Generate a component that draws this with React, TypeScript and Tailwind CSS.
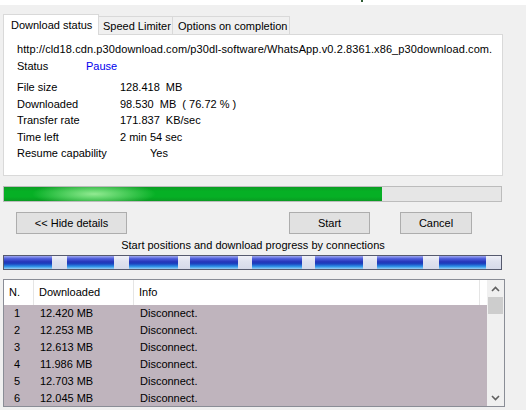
import React from 'react'

const font = { fontFamily: '"Liberation Sans", Arial, sans-serif' }

const details: [string, string][] = [
  ['File size', '128.418  MB'],
  ['Downloaded', '98.530  MB  ( 76.72 % )'],
  ['Transfer rate', '171.837  KB/sec'],
  ['Time left', '2 min 54 sec'],
]

// [width, isDownloaded] for each piece of the connections bar
const segments: [number, boolean][] = [
  [48, true], [15, false], [47, true], [15, false], [49, true], [12, false],
  [48, true], [14, false], [50, true], [13, false], [48, true], [14, false],
  [46, true], [16, false], [47, true], [15, false],
]

const connections = [
  ['1', '12.420 MB'],
  ['2', '12.253 MB'],
  ['3', '12.613 MB'],
  ['4', '11.986 MB'],
  ['5', '12.703 MB'],
  ['6', '12.045 MB'],
]

function Button({ label, className }: { label: string; className: string }) {
  return (
    <button className={`h-[22px] bg-[#e1e1e1] border border-[#adadad] text-[11px] text-black ${className}`}>
      {label}
    </button>
  )
}

export default function App() {
  return (
    <div className="w-[526px] h-[410px] overflow-hidden bg-[#f0f0f0] text-[11px] text-black" style={font}>
      {/* strip of the window above */}
      <div className="h-[5px] bg-white flex">
        <div className="ml-[361px] w-[2px] h-[2px] bg-[#2f5d34]" />
      </div>

      {/* tabs */}
      <div className="mt-[9px] ml-[3px] flex items-end h-[21px] relative z-10">
        <div className="w-[96px] h-[21px] bg-white border border-b-0 border-[#d9d9d9] pl-[7px] pt-[3px] leading-[14px]">
          Download status
        </div>
        <div className="w-[74px] h-[19px] border border-l-0 border-b-0 border-[#d9d9d9] pl-[4px] pt-[2px] leading-[14px]">
          Speed Limiter
        </div>
        <div className="w-[117px] h-[19px] border border-l-0 border-b-0 border-[#d9d9d9] pl-[5px] pt-[2px] leading-[14px]">
          Options on completion
        </div>
      </div>

      {/* tab panel */}
      <div className="-mt-px ml-[3px] w-[500px] h-[142px] bg-white border border-[#d9d9d9] pl-[13px] pt-[6px]">
        <div className="h-[17px] leading-[17px] whitespace-nowrap tracking-[0.1px]">
          http://cld18.cdn.p30download.com/p30dl-software/WhatsApp.v0.2.8361.x86_p30download.com.
        </div>
        <div className="h-[17px] leading-[17px] flex">
          <span className="w-[69px]">Status</span>
          <span className="text-[#0000ee]">Pause</span>
        </div>
        <div className="mt-[4px]">
          {details.map(([k, v]) => (
            <div key={k} className="h-[16.5px] leading-[16.5px] flex">
              <span className="w-[103px]">{k}</span>
              <span className="whitespace-pre">{v}</span>
            </div>
          ))}
          <div className="h-[16.5px] leading-[16.5px] flex">
            <span className="w-[133px]">Resume capability</span>
            <span>Yes</span>
          </div>
        </div>
      </div>

      {/* overall progress */}
      <div className="mt-[10px] ml-[3px] w-[499px] h-[16px] bg-[#e6e6e6] border border-[#bcbcbc]">
        <div className="h-full w-[378px] bg-[radial-gradient(ellipse_62px_12px_at_90px_50%,#92ea92,transparent),linear-gradient(to_bottom,#0c9d24,#06b025_30%,#06b025_70%,#0a9a22)]" />
      </div>

      {/* buttons */}
      <div className="mt-[10px] flex">
        <Button label="<< Hide details" className="ml-[16px] w-[111px]" />
        <Button label="Start" className="ml-[162px] w-[81px]" />
        <Button label="Cancel" className="ml-[30px] w-[72px]" />
      </div>

      <div className="mt-[4px] w-[506px] text-center leading-[14px]">
        Start positions and download progress by connections
      </div>

      {/* connections bar */}
      <div className="mt-[3px] ml-[3px] w-[499px] h-[15px] border border-[#565a6e] flex">
        {segments.map(([w, done], i) => (
          <div
            key={i}
            className={
              done
                ? 'h-full bg-[linear-gradient(to_bottom,#a0a8f0,#5060dc_20%,#2434b8_45%,#1c44c0_60%,#2c90e6_80%,#98d0f4)]'
                : 'h-full bg-[linear-gradient(to_bottom,#f0f1f8,#dfe2ef_40%,#d6daea)]'
            }
            style={{ width: w }}
          />
        ))}
      </div>

      {/* connections list */}
      <div className="mt-[9px] ml-[3px] w-[502px] h-[128px] border border-[#8a8d96] flex overflow-hidden">
        <div className="flex-1 flex flex-col">
          <div className="h-[25px] bg-white flex leading-[25px]">
            <div className="w-[30px] pl-[5px] border-r border-[#e5e5e5]">N.</div>
            <div className="w-[100px] pl-[5px] border-r border-[#e5e5e5]">Downloaded</div>
            <div className="w-[346px] pl-[5px] border-r border-[#e5e5e5]">Info</div>
          </div>
          <div className="flex-1 bg-[#bfb4bd]">
            {connections.map(([n, d]) => (
              <div key={n} className="h-[17px] leading-[17px] flex">
                <div className="w-[31px] pl-[10px]">{n}</div>
                <div className="w-[100px] pl-[5px]">{d}</div>
                <div className="pl-[5px]">Disconnect.</div>
              </div>
            ))}
          </div>
        </div>
        {/* scrollbar */}
        <div className="w-[17px] bg-[#f0f0f0] flex flex-col items-center">
          <div className="h-[17px] flex items-center justify-center">
            <svg width="9" height="6" viewBox="0 0 9 6">
              <path d="M1 5 L4.5 1.5 L8 5" fill="none" stroke="#606060" strokeWidth="1.6" />
            </svg>
          </div>
          <div className="w-[15px] h-[17px] bg-[#cdcdcd]" />
          <div className="flex-1" />
          <div className="h-[17px] flex items-center justify-center">
            <svg width="9" height="6" viewBox="0 0 9 6">
              <path d="M1 1 L4.5 4.5 L8 1" fill="none" stroke="#606060" strokeWidth="1.6" />
            </svg>
          </div>
        </div>
      </div>
    </div>
  )
}
